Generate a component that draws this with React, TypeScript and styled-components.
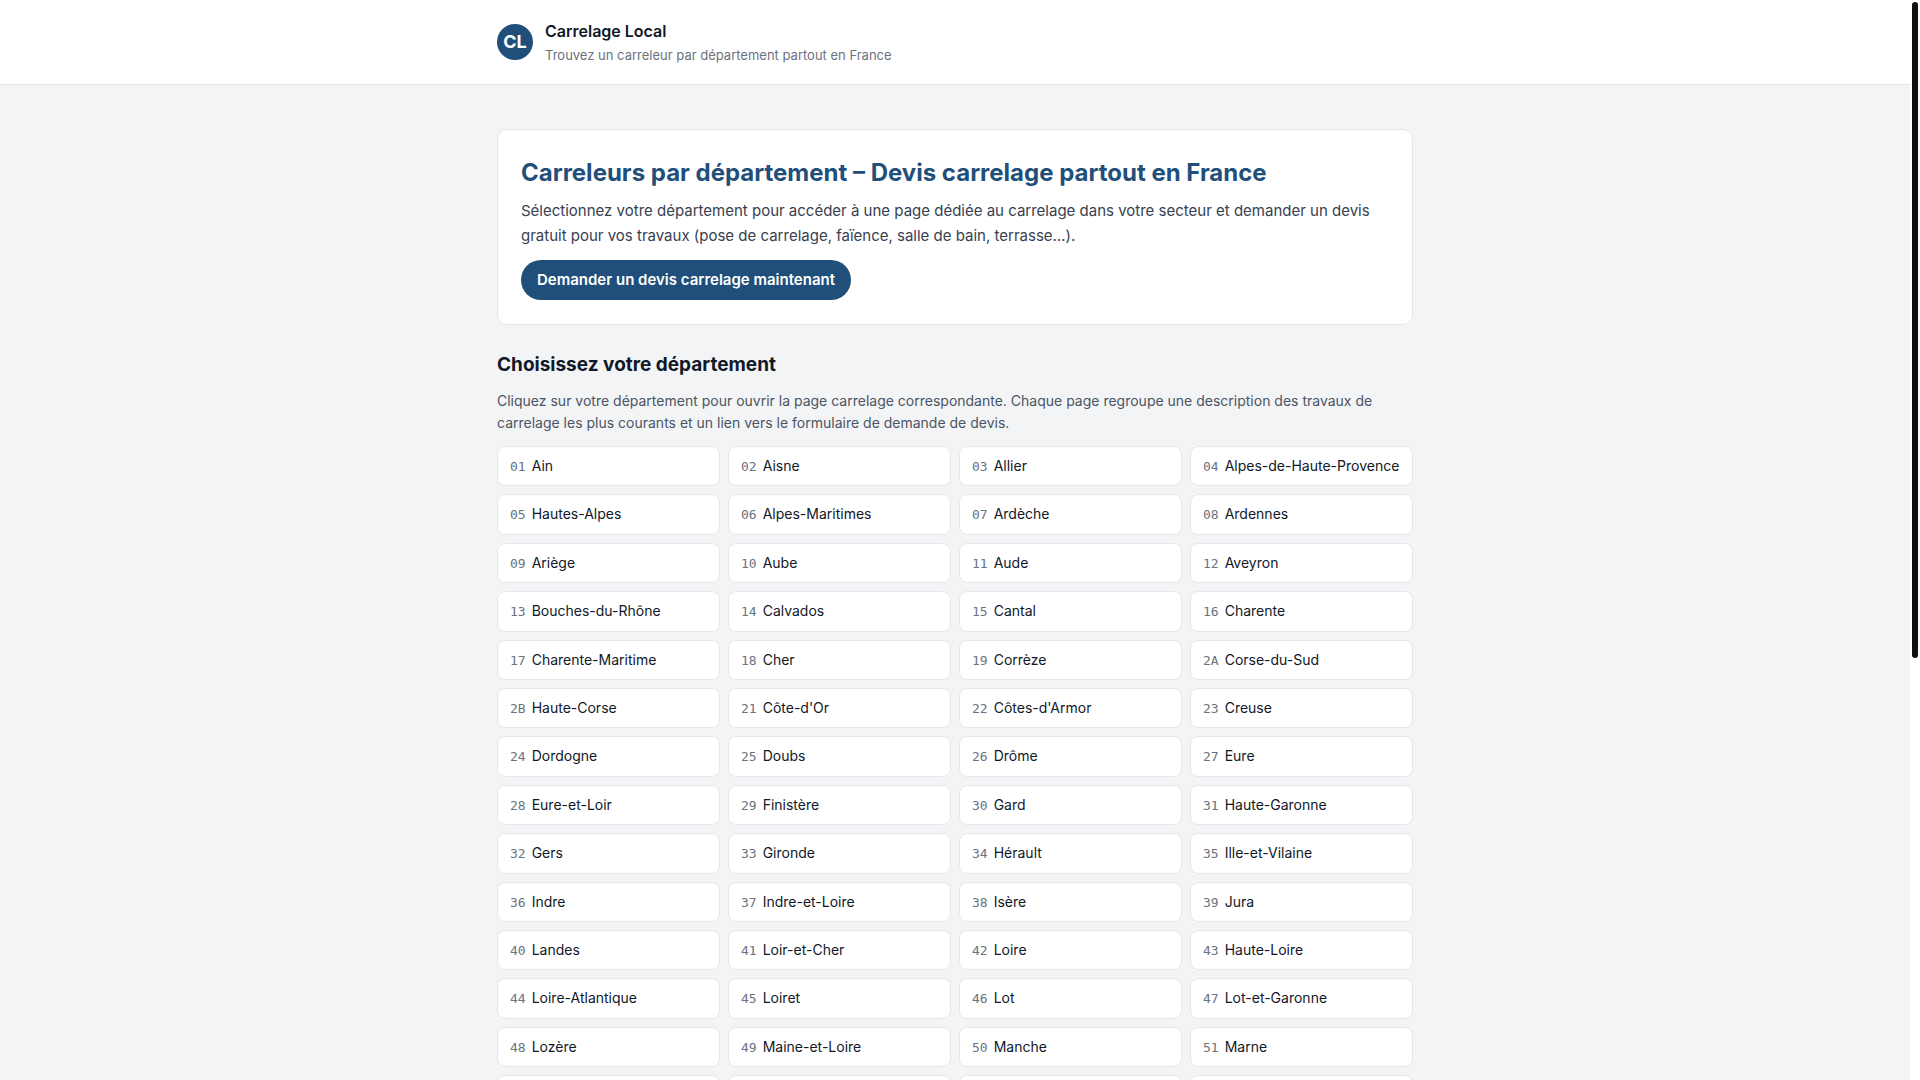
import React from "react";
import styled, { createGlobalStyle } from "styled-components";

const GlobalStyle = createGlobalStyle`
  *, *::before, *::after { box-sizing: border-box; }
  body {
    margin: 0;
    font-family: Inter, "Liberation Sans", sans-serif;
    font-size: 16px;
    line-height: 1.6;
    color: #111827;
    background: #f3f4f6;
  }
  h1, h2, p { margin: 0; }
`;

const Shell = styled.div`
  display: flex;
  height: 100vh;
`;

const Scroller = styled.div`
  flex: 1;
  min-width: 0;
  overflow-y: auto;
  scrollbar-width: none;
`;

const Rail = styled.div`
  width: 10px;
  padding: 2px;
  background: #ffffff;
`;

const Thumb = styled.div`
  width: 6px;
  height: 61%;
  border-radius: 3px;
  background: #0f1010;
`;

const Header = styled.header`
  background: #ffffff;
  border-bottom: 1px solid #e5e7eb;
`;

const Container = styled.div`
  max-width: 948px;
  margin: 0 auto;
  padding: 0 16px;
`;

const Brand = styled.div`
  display: flex;
  align-items: center;
  gap: 12px;
  padding: 18px 0;
`;

const Logo = styled.div`
  display: grid;
  place-items: center;
  width: 36px;
  height: 36px;
  border-radius: 50%;
  background: #1f4f7a;
  color: #ffffff;
  font-size: 18px;
  font-weight: 700;
`;

const BrandName = styled.div`
  font-size: 16px;
  line-height: 26px;
  font-weight: 600;
`;

const Tagline = styled.div`
  font-size: 13px;
  line-height: 22px;
  color: #6b7280;
`;

const Main = styled.main`
  padding: 44px 0 40px;
`;

const Hero = styled.section`
  padding: 24px 23px;
  border: 1px solid #e5e7eb;
  border-radius: 10px;
  background: #ffffff;
`;

const Title = styled.h1`
  margin-bottom: 6px;
  font-size: 24px;
  line-height: 38px;
  font-weight: 700;
  color: #1f4f7a;
`;

const Lead = styled.p`
  margin-bottom: 12px;
  font-size: 15px;
  line-height: 25px;
  color: #374151;
`;

const Cta = styled.a`
  display: inline-block;
  padding: 8px 16px;
  border-radius: 999px;
  background: #1f4f7a;
  color: #ffffff;
  font-size: 15px;
  line-height: 24px;
  font-weight: 600;
  text-decoration: none;
`;

const Heading = styled.h2`
  margin: 25px 0 10px;
  font-size: 19px;
  line-height: 30px;
  font-weight: 700;
`;

const Intro = styled.p`
  margin-bottom: 12px;
  font-size: 14px;
  line-height: 22px;
  color: #4b5563;
`;

const Grid = styled.ul`
  display: grid;
  grid-template-columns: repeat(4, minmax(0, 1fr));
  gap: 8px;
  margin: 0;
  padding: 0;
  list-style: none;
`;

const Card = styled.a`
  display: block;
  padding: 8px 12px;
  border: 1px solid #e5e7eb;
  border-radius: 8px;
  background: #ffffff;
  color: #111827;
  font-size: 14px;
  text-decoration: none;
  white-space: nowrap;
`;

const Code = styled.span`
  margin-right: 6px;
  font-family: "DejaVu Sans Mono", monospace;
  font-size: 13px;
  line-height: 1;
  color: #6b7280;
`;

const departments: [string, string][] = [
  ["01", "Ain"], ["02", "Aisne"], ["03", "Allier"], ["04", "Alpes-de-Haute-Provence"],
  ["05", "Hautes-Alpes"], ["06", "Alpes-Maritimes"], ["07", "Ardèche"], ["08", "Ardennes"],
  ["09", "Ariège"], ["10", "Aube"], ["11", "Aude"], ["12", "Aveyron"],
  ["13", "Bouches-du-Rhône"], ["14", "Calvados"], ["15", "Cantal"], ["16", "Charente"],
  ["17", "Charente-Maritime"], ["18", "Cher"], ["19", "Corrèze"], ["2A", "Corse-du-Sud"],
  ["2B", "Haute-Corse"], ["21", "Côte-d'Or"], ["22", "Côtes-d'Armor"], ["23", "Creuse"],
  ["24", "Dordogne"], ["25", "Doubs"], ["26", "Drôme"], ["27", "Eure"],
  ["28", "Eure-et-Loir"], ["29", "Finistère"], ["30", "Gard"], ["31", "Haute-Garonne"],
  ["32", "Gers"], ["33", "Gironde"], ["34", "Hérault"], ["35", "Ille-et-Vilaine"],
  ["36", "Indre"], ["37", "Indre-et-Loire"], ["38", "Isère"], ["39", "Jura"],
  ["40", "Landes"], ["41", "Loir-et-Cher"], ["42", "Loire"], ["43", "Haute-Loire"],
  ["44", "Loire-Atlantique"], ["45", "Loiret"], ["46", "Lot"], ["47", "Lot-et-Garonne"],
  ["48", "Lozère"], ["49", "Maine-et-Loire"], ["50", "Manche"], ["51", "Marne"],
  ["52", "Haute-Marne"], ["53", "Mayenne"], ["54", "Meurthe-et-Moselle"], ["55", "Meuse"],
];

export default function App() {
  return (
    <>
      <GlobalStyle />
      <Shell>
        <Scroller>
          <Header>
            <Container>
              <Brand>
                <Logo>CL</Logo>
                <div>
                  <BrandName>Carrelage Local</BrandName>
                  <Tagline>Trouvez un carreleur par département partout en France</Tagline>
                </div>
              </Brand>
            </Container>
          </Header>
          <Container>
            <Main>
              <Hero>
                <Title>Carreleurs par département – Devis carrelage partout en France</Title>
                <Lead>
                  Sélectionnez votre département pour accéder à une page dédiée au carrelage dans
                  votre secteur et demander un devis gratuit pour vos travaux (pose de carrelage,
                  faïence, salle de bain, terrasse…).
                </Lead>
                <Cta href="#devis">Demander un devis carrelage maintenant</Cta>
              </Hero>
              <Heading>Choisissez votre département</Heading>
              <Intro>
                Cliquez sur votre département pour ouvrir la page carrelage correspondante. Chaque
                page regroupe une description des travaux de carrelage les plus courants et un lien
                vers le formulaire de demande de devis.
              </Intro>
              <Grid>
                {departments.map(([code, name]) => (
                  <li key={code}>
                    <Card href={`#${code}`}>
                      <Code>{code}</Code>
                      {name}
                    </Card>
                  </li>
                ))}
              </Grid>
            </Main>
          </Container>
        </Scroller>
        <Rail aria-hidden="true">
          <Thumb />
        </Rail>
      </Shell>
    </>
  );
}
